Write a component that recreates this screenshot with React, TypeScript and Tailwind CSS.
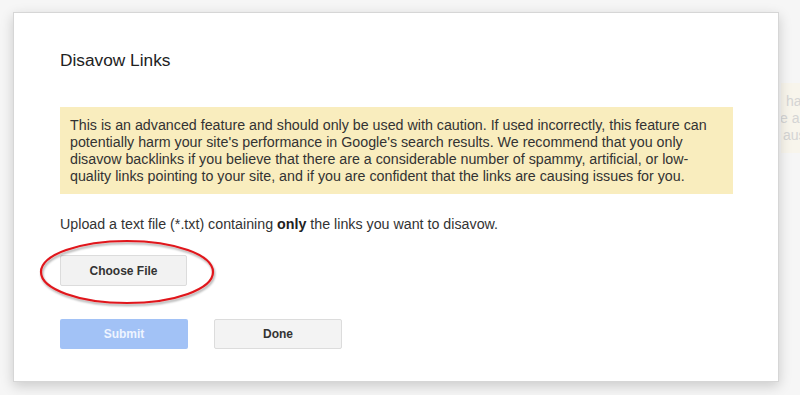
import React from "react";

export default function App() {
  return (
    <div
      className="relative w-[800px] h-[395px] overflow-hidden bg-[#f6f6f6]"
      style={{ fontFamily: '"Liberation Sans", Arial, sans-serif' }}
    >
      {/* faint background page content at right edge */}
      <div className="absolute left-[781px] top-[83px] w-[19px] h-[70px] overflow-hidden bg-[#f8f5ec] text-[14px] leading-[17px] text-[#d4d4d4] pt-[10px] pl-[2px] whitespace-nowrap">
        <div className="pl-[3px]">ha</div>
        <div className="-ml-[3px]">e ar</div>
        <div>aus</div>
      </div>

      <div className="relative ml-[13px] mt-[12px] w-[766px] h-[370px] bg-white border border-[#d6d6d6] shadow-[0_4px_12px_rgba(0,0,0,0.18)] pl-[46px] pt-[37px]">
        <h1 className="text-[17.3px] leading-[20px] text-[#222]">Disavow Links</h1>

        <div className="mt-[37px] w-[673px] h-[87px] bg-[#f9edbe] px-[10px] pt-[10px] text-[14.25px] leading-[17px] text-[#333] whitespace-nowrap">
          This is an advanced feature and should only be used with caution. If used incorrectly, this feature can
          <br />
          potentially harm your site's performance in Google's search results. We recommend that you only
          <br />
          disavow backlinks if you believe that there are a considerable number of spammy, artificial, or low-
          <br />
          quality links pointing to your site, and if you are confident that the links are causing issues for you.
        </div>

        <p className="mt-[22px] text-[14.25px] leading-[17px] text-[#333]">
          Upload a text file (*.txt) containing <b className="text-[#222]">only</b> the links you want to disavow.
        </p>

        <div className="mt-[22px] w-[127px] h-[31px] flex items-center justify-center bg-[#f2f2f2] border border-[#dcdcdc] rounded-[2px] text-[12px] font-bold text-[#333]">
          Choose File
        </div>

        <div className="mt-[33px] flex gap-[26px]">
          <div className="w-[128px] h-[30px] flex items-center justify-center bg-[#a2c2f6] rounded-[2px] text-[12px] font-bold text-[#eef4ff]">
            Submit
          </div>
          <div className="w-[128px] h-[30px] flex items-center justify-center bg-[#f3f3f3] border border-[#dcdcdc] rounded-[2px] text-[12px] font-bold text-[#333]">
            Done
          </div>
        </div>

        {/* red annotation ellipse */}
        <svg
          className="absolute left-[24px] top-[225px]"
          width="180"
          height="72"
          viewBox="0 0 180 72"
        >
          <defs>
            <filter id="sh" x="-10%" y="-20%" width="120%" height="140%">
              <feDropShadow dx="1" dy="2" stdDeviation="1.2" floodColor="#000" floodOpacity="0.35" />
            </filter>
          </defs>
          <ellipse
            cx="89"
            cy="34"
            rx="86"
            ry="31"
            fill="none"
            stroke="#e0161b"
            strokeWidth="2.2"
            filter="url(#sh)"
          />
        </svg>
      </div>
    </div>
  );
}
